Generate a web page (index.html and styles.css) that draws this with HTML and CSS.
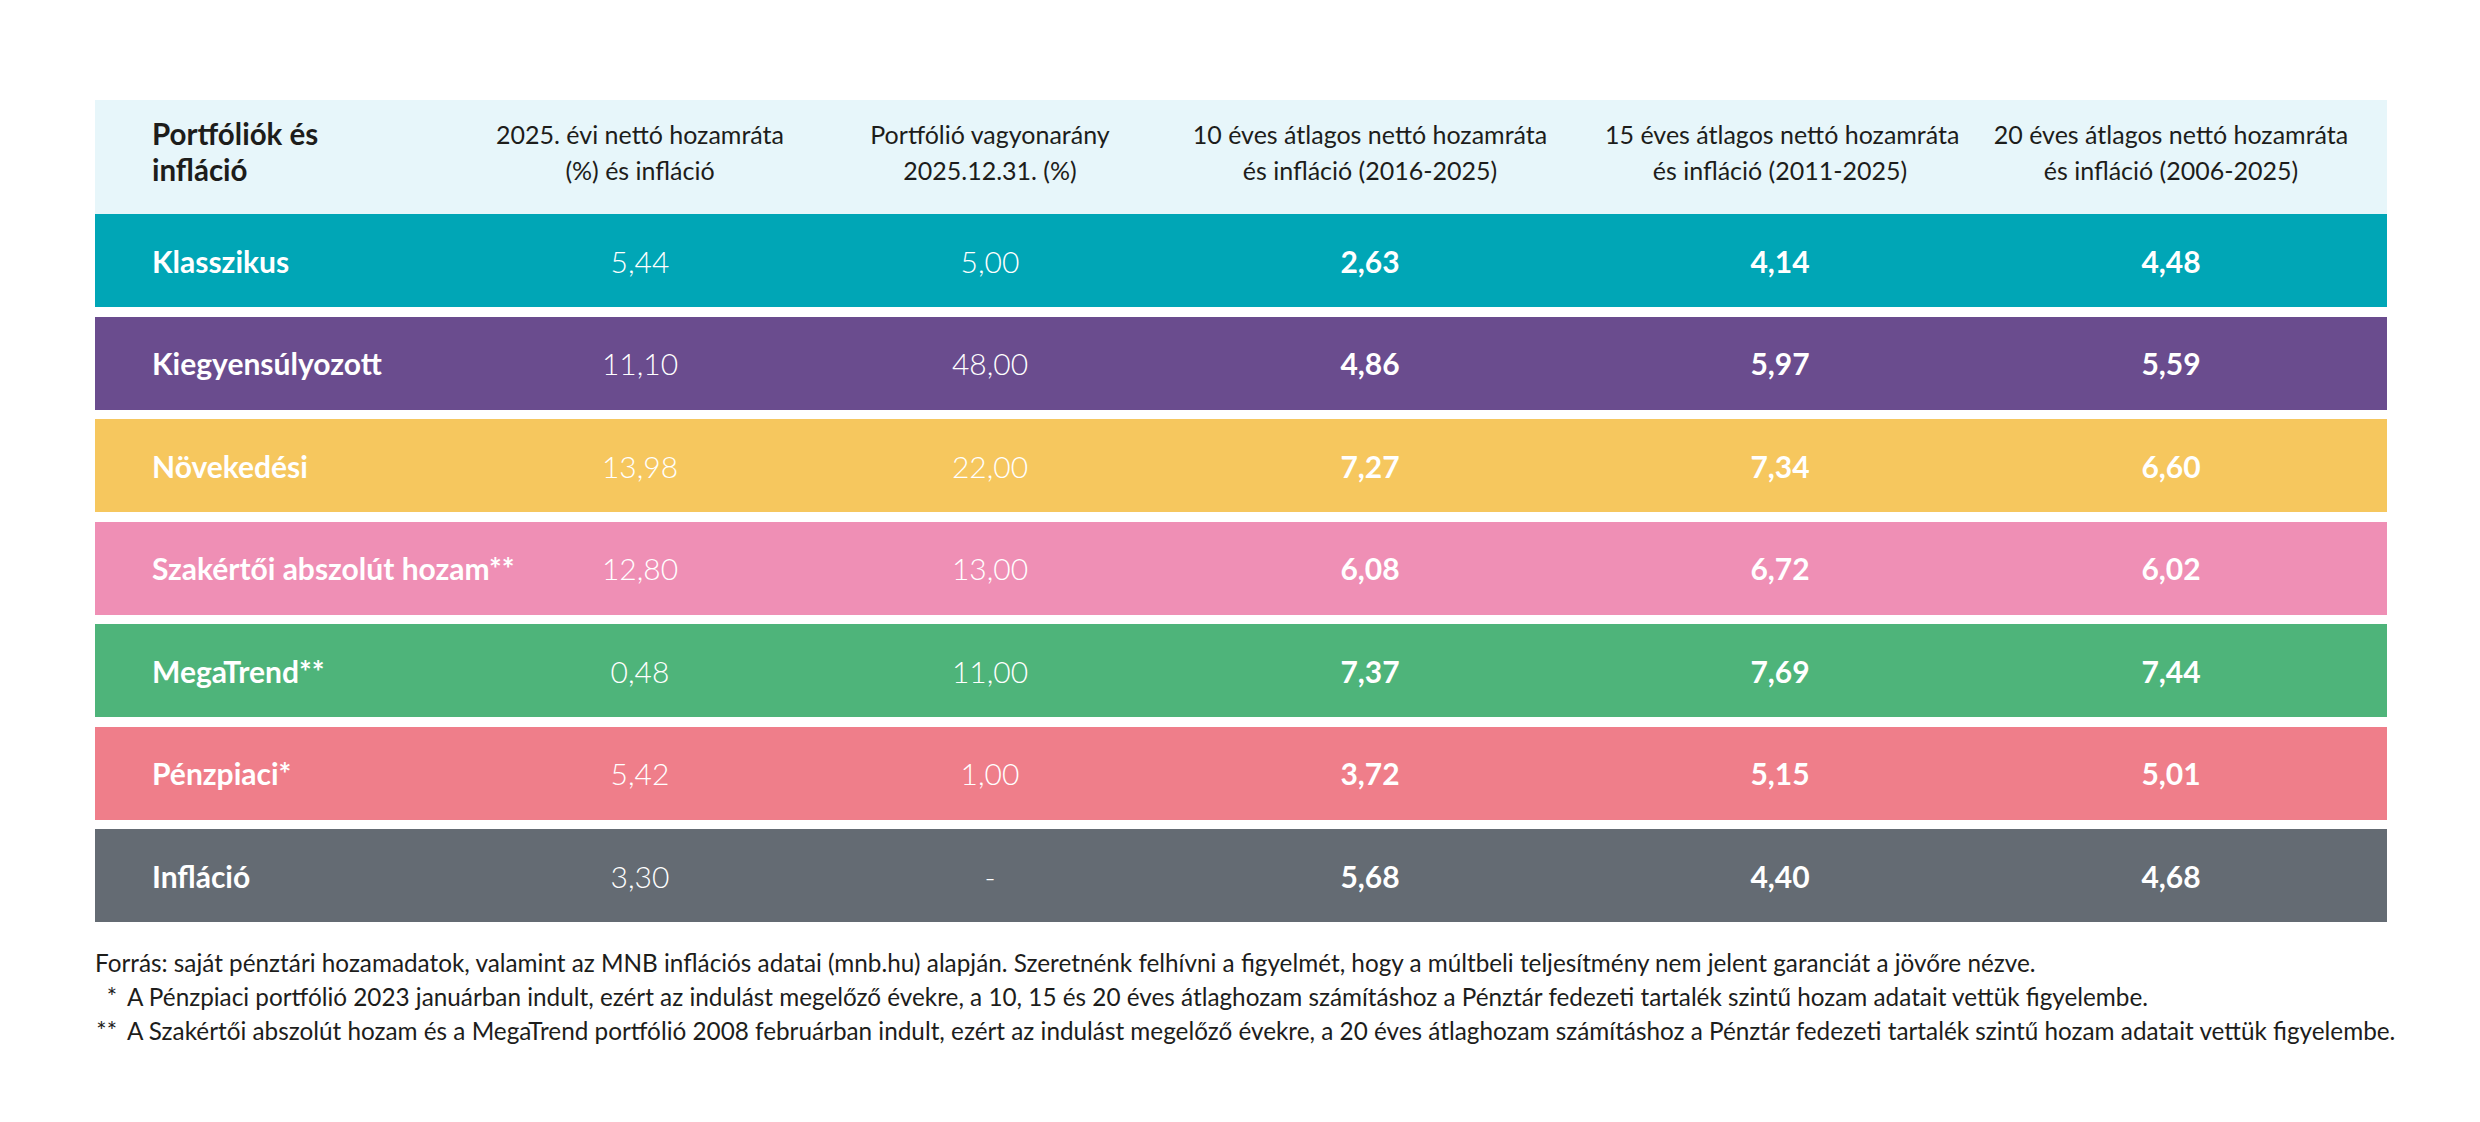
FILE: index.html
```html
<!DOCTYPE html>
<html lang="hu">
<head>
<meta charset="utf-8">
<title>Portfóliók és infláció</title>
<link rel="stylesheet" href="styles.css">
</head>
<body>
<div class="page">
  <div class="table">
    <div class="row head">
      <div class="cell label">Portfóliók és<br>infláció</div>
      <div class="cell">2025. évi nettó hozamráta<br>(%) és infláció</div>
      <div class="cell">Portfólió vagyonarány<br>2025.12.31. (%)</div>
      <div class="cell">10 éves átlagos nettó hozamráta<br>és infláció (2016-2025)</div>
      <div class="cell">15 éves átlagos nettó hozamráta<br>és infláció (2011-2025)</div>
      <div class="cell">20 éves átlagos nettó hozamráta<br>és infláció (2006-2025)</div>
    </div>
    <div class="row teal">
      <div class="cell label">Klasszikus</div>
      <div class="cell light">5,44</div>
      <div class="cell light">5,00</div>
      <div class="cell bold">2,63</div>
      <div class="cell bold">4,14</div>
      <div class="cell bold">4,48</div>
    </div>
    <div class="row purple">
      <div class="cell label">Kiegyensúlyozott</div>
      <div class="cell light">11,10</div>
      <div class="cell light">48,00</div>
      <div class="cell bold">4,86</div>
      <div class="cell bold">5,97</div>
      <div class="cell bold">5,59</div>
    </div>
    <div class="row yellow">
      <div class="cell label">Növekedési</div>
      <div class="cell light">13,98</div>
      <div class="cell light">22,00</div>
      <div class="cell bold">7,27</div>
      <div class="cell bold">7,34</div>
      <div class="cell bold">6,60</div>
    </div>
    <div class="row pink">
      <div class="cell label">Szakértői abszolút hozam**</div>
      <div class="cell light">12,80</div>
      <div class="cell light">13,00</div>
      <div class="cell bold">6,08</div>
      <div class="cell bold">6,72</div>
      <div class="cell bold">6,02</div>
    </div>
    <div class="row green">
      <div class="cell label">MegaTrend**</div>
      <div class="cell light">0,48</div>
      <div class="cell light">11,00</div>
      <div class="cell bold">7,37</div>
      <div class="cell bold">7,69</div>
      <div class="cell bold">7,44</div>
    </div>
    <div class="row coral">
      <div class="cell label">Pénzpiaci*</div>
      <div class="cell light">5,42</div>
      <div class="cell light">1,00</div>
      <div class="cell bold">3,72</div>
      <div class="cell bold">5,15</div>
      <div class="cell bold">5,01</div>
    </div>
    <div class="row gray">
      <div class="cell label">Infláció</div>
      <div class="cell light">3,30</div>
      <div class="cell light">-</div>
      <div class="cell bold">5,68</div>
      <div class="cell bold">4,40</div>
      <div class="cell bold">4,68</div>
    </div>
  </div>
  <div class="notes">
    <p>Forrás: saját pénztári hozamadatok, valamint az MNB inflációs adatai (mnb.hu) alapján. Szeretnénk felhívni a figyelmét, hogy a múltbeli teljesítmény nem jelent garanciát a jövőre nézve.</p>
    <p><span class="mark">*</span>A Pénzpiaci portfólió 2023 januárban indult, ezért az indulást megelőző évekre, a 10, 15 és 20 éves átlaghozam számításhoz a Pénztár fedezeti tartalék szintű hozam adatait vettük figyelembe.</p>
    <p><span class="mark">**</span>A Szakértői abszolút hozam és a MegaTrend portfólió 2008 februárban indult, ezért az indulást megelőző évekre, a 20 éves átlaghozam számításhoz a Pénztár fedezeti tartalék szintű hozam adatait vettük figyelembe.</p>
  </div>
</div>
</body>
</html>
```
FILE: styles.css
```css
html, body {
  margin: 0;
  padding: 0;
  background: #ffffff;
}

body {
  font-family: Lato, "Open Sans", sans-serif;
  color: #1d1d1b;
}

.page {
  padding: 100px 93px 0 95px;
}

.table {
  display: flex;
  flex-direction: column;
  gap: 9.5px;
  width: 2292px;
}

.row {
  display: grid;
  grid-template-columns: 340px 410px 290px 470px 350px 432px;
  align-items: center;
  height: 93px;
  color: #ffffff;
  font-size: 30px;
}

.row.head {
  height: 114px;
  background: #e7f6fa;
  color: #1d1d1b;
  font-size: 25px;
  line-height: 36px;
  margin-bottom: -9.5px;
  padding-bottom: 10px;
  box-sizing: border-box;
}

.cell {
  text-align: center;
  white-space: nowrap;
}

.cell.label {
  text-align: left;
  padding-left: 57px;
  font-weight: 700;
}

.head .cell {
  font-weight: 400;
}

.head .cell.label {
  font-weight: 700;
  font-size: 29.5px;
}

.cell.light {
  font-weight: 300;
}

.cell.bold {
  font-weight: 700;
}

.teal { background: #00a6b6; }
.purple { background: #6a4c8e; }
.yellow { background: #f6c75e; }
.pink { background: #ef8fb5; }
.green { background: #4eb47a; }
.coral { background: #ef7e8a; }
.gray { background: #646b73; }

.notes {
  margin-top: 24px;
  font-size: 24.3px;
  line-height: 34px;
  color: #1d1d1b;
}

.notes p {
  margin: 0;
  white-space: nowrap;
}

.mark {
  display: inline-block;
  width: 22px;
  text-align: right;
  margin-right: 10px;
}
```
